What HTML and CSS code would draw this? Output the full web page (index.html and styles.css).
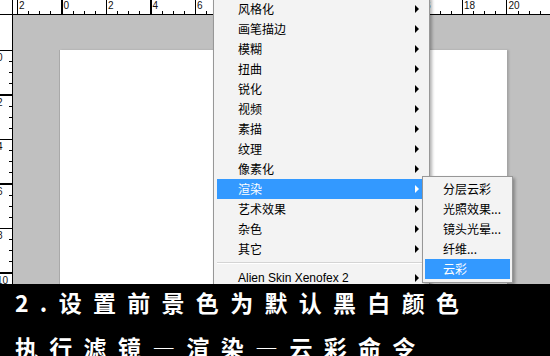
FILE: index.html
```html
<!DOCTYPE html>
<html lang="zh-CN">
<head>
  <meta charset="UTF-8" />
  <title>滤镜 渲染 云彩</title>
  <link rel="stylesheet" href="styles.css">
</head>
<body>
  <div class="screen">
    <div class="corner"></div>
    <div class="ruler-top">
      <span>2</span><span>0</span><span>2</span><span>4</span><span>6</span><span>8</span>
      <span>10</span><span>12</span><span>14</span><span>16</span><span>18</span><span>20</span>
    </div>
    <div class="ruler-left">
      <span>0</span><span>2</span><span>4</span><span>6</span><span>8</span><span>10</span>
    </div>
    <div class="canvas">
      <div class="doc"></div>
    </div>

    <div class="menu">
      <div class="item sub">风格化</div>
      <div class="item sub">画笔描边</div>
      <div class="item sub">模糊</div>
      <div class="item sub">扭曲</div>
      <div class="item sub">锐化</div>
      <div class="item sub">视频</div>
      <div class="item sub">素描</div>
      <div class="item sub">纹理</div>
      <div class="item sub">像素化</div>
      <div class="item sub active">渲染</div>
      <div class="item sub">艺术效果</div>
      <div class="item sub">杂色</div>
      <div class="item sub">其它</div>
      <div class="sep"></div>
      <div class="item sub latin">Alien Skin Xenofex 2</div>
    </div>

    <div class="submenu">
      <div class="item">分层云彩</div>
      <div class="item">光照效果...</div>
      <div class="item">镜头光晕...</div>
      <div class="item">纤维...</div>
      <div class="item active">云彩</div>
    </div>
  </div>

  <div class="caption">
    <div class="line">2.设置前景色为默认黑白颜色</div>
    <div class="line second">执行滤镜—渲染—云彩命令</div>
  </div>
</body>
</html>
```

FILE: styles.css
```css
body {
  margin: 0;
  width: 550px;
  height: 356px;
  overflow: hidden;
  background: #000;
  font-family: "Noto Sans CJK SC", "Liberation Sans", sans-serif;
}

.screen {
  position: relative;
  height: 284px;
  display: grid;
  grid-template-columns: 13px 1fr;
  grid-template-rows: 15px 1fr;
  background: #c0c0c0;
  overflow: hidden;
}

.corner {
  background: #fff;
  border-right: 1px solid #000;
  border-bottom: 1px solid #000;
  box-sizing: border-box;
}

/* rulers */
.ruler-top {
  display: flex;
  padding-left: 4px;
  background-color: #fff;
  border-bottom: 1px solid #000;
  background-image:
    repeating-linear-gradient(90deg, #000 0 1px, transparent 1px 44.5px),
    repeating-linear-gradient(90deg, #000 0 1px, transparent 1px 11.125px);
  background-size: 100% 100%, 100% 3px;
  background-position: 4px 0, 4px 100%;
  background-repeat: no-repeat;
  font-family: "Liberation Sans", sans-serif;
  font-size: 10px;
  line-height: 11px;
  color: #111;
}
.ruler-top span {
  flex: 0 0 44.5px;
  padding-left: 2px;
  box-sizing: border-box;
}

.ruler-left {
  display: flex;
  flex-direction: column;
  padding-top: 35px;
  background-color: #fff;
  border-right: 1px solid #000;
  background-image:
    repeating-linear-gradient(180deg, #000 0 1px, transparent 1px 44.5px),
    repeating-linear-gradient(180deg, #000 0 1px, transparent 1px 11.125px);
  background-size: 100% 100%, 3px 100%;
  background-position: 0 35px, 100% 35px;
  background-repeat: no-repeat;
  font-family: "Liberation Sans", sans-serif;
  font-size: 10px;
  line-height: 12px;
  color: #111;
  overflow: hidden;
}
.ruler-left span {
  flex: 0 0 44.5px;
  margin-left: -3px;
  padding-top: 2px;
  box-sizing: border-box;
}

/* document */
.canvas {
  padding: 35px 0 0 46px;
}
.doc {
  width: 447px;
  height: 100%;
  background: #fff;
  border-left: 1px solid #a9a9a9;
  box-shadow: 2px 0 2px rgba(0, 0, 0, 0.15);
}

/* menus */
.menu,
.submenu {
  position: absolute;
  background: #f3f3f3;
  border: 1px solid #979797;
  box-shadow: 2px 2px 3px rgba(0, 0, 0, 0.3);
  font-size: 12px;
  color: #000;
}
.menu {
  left: 213px;
  top: -4px;
  width: 215px;
  padding: 2px 0 4px;
}
.submenu {
  left: 422px;
  top: 176px;
  width: 89px;
  padding: 2px 0 3px;
}

.item {
  position: relative;
  height: 20px;
  line-height: 20px;
  margin: 0 2px 0 3px;
  padding-left: 21px;
}
.submenu .item {
  margin: 0 2px 0 2px;
  padding-left: 18px;
}
.item.active {
  background: #3399ff;
  color: #fff;
}
.item.latin {
  font-family: "Liberation Sans", sans-serif;
}
.sub::after {
  content: "";
  position: absolute;
  right: 8px;
  top: 6px;
  border-left: 4px solid #000;
  border-top: 4px solid transparent;
  border-bottom: 4px solid transparent;
}
.item.active::after {
  border-left-color: #fff;
}

.sep {
  height: 1px;
  margin: 3px 2px 4px 3px;
  background: #d4d4d4;
  border-bottom: 1px solid #fff;
}

/* caption */
.caption {
  height: 72px;
  padding-left: 15px;
  background: #000;
  color: #fff;
  font-size: 23px;
  font-weight: bold;
  letter-spacing: 11.3px;
  white-space: nowrap;
}
.line {
  height: 36px;
  line-height: 36px;
}
.line.second {
  margin-top: 9px;
}
```
